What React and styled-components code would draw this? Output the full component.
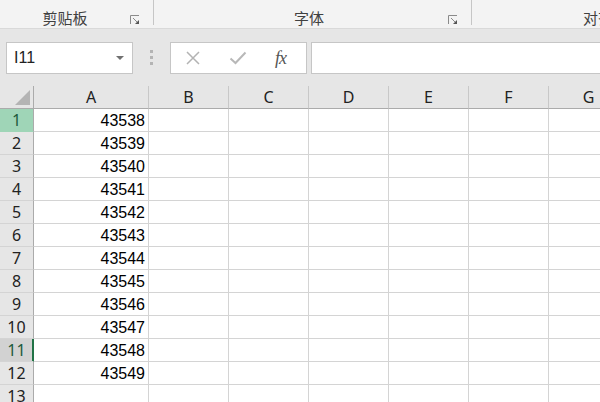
import React from "react";
import styled, { createGlobalStyle } from "styled-components";

const GlobalStyle = createGlobalStyle`
  html, body {
    margin: 0;
    padding: 0;
    width: 600px;
    height: 402px;
    overflow: hidden;
    background: #ffffff;
    font-family: "Noto Sans CJK SC", "Noto Sans", sans-serif;
  }
`;

const Page = styled.div`
  width: 600px;
  height: 402px;
  overflow: hidden;
  display: flex;
  flex-direction: column;
`;

const Ribbon = styled.div`
  display: flex;
  height: 28px;
  flex-shrink: 0;
  background: #f3f3f3;
  border-bottom: 1px solid #d9d9d9;
`;

const Group = styled.div`
  position: relative;
  display: flex;
  width: ${(p) => p.$width}px;
  flex-shrink: 0;
  padding-left: ${(p) => p.$shift || 0}px;
  box-sizing: border-box;
  &::after {
    content: "";
    position: absolute;
    right: 0;
    top: 0;
    height: 25px;
    width: 1px;
    background: #c6c6c6;
  }
`;

const GroupLabel = styled.div`
  flex: 1;
  text-align: center;
  font-size: 15px;
  line-height: 15px;
  padding-top: 10px;
  color: #404040;
  white-space: nowrap;
`;

const Launcher = styled.div`
  width: 24px;
  display: flex;
  justify-content: flex-start;
  padding-top: 15px;
`;

const FormulaBar = styled.div`
  display: flex;
  align-items: flex-start;
  height: 57px;
  flex-shrink: 0;
  background: #e6e6e6;
  padding: 13px 0 0 6px;
  box-sizing: border-box;
`;

const NameBox = styled.div`
  width: 127px;
  height: 32px;
  box-sizing: border-box;
  background: #fff;
  border: 1px solid #c6c6c6;
  display: flex;
  align-items: center;
  padding: 0 6px 0 7px;
  font-family: "Liberation Sans", Arial, sans-serif;
  font-size: 16px;
  color: #222;
`;

const NameText = styled.span`
  flex: 1;
`;

const Caret = styled.span`
  width: 0;
  height: 0;
  border-left: 4px solid transparent;
  border-right: 4px solid transparent;
  border-top: 4px solid #707070;
  margin-right: 2px;
`;

const Dots = styled.div`
  width: 37px;
  display: flex;
  flex-direction: column;
  align-items: center;
  gap: 3px;
  padding-top: 8px;
  span {
    width: 3px;
    height: 3px;
    background: #b4b4b4;
  }
`;

const FxBox = styled.div`
  width: 137px;
  height: 32px;
  box-sizing: border-box;
  background: #fff;
  border: 1px solid #c6c6c6;
  display: flex;
  align-items: center;
  gap: 28px;
  padding-left: 14px;
  margin-right: 4px;
`;

const FxLabel = styled.span`
  font-family: "Liberation Serif", "Times New Roman", serif;
  font-style: italic;
  font-size: 18px;
  color: #555;
  letter-spacing: -1px;
`;

const FormulaInput = styled.div`
  flex: 1;
  height: 32px;
  box-sizing: border-box;
  background: #fff;
  border: 1px solid #c6c6c6;
  border-right: none;
`;

const Sheet = styled.div`
  display: grid;
  grid-template-columns: 34px 115px repeat(6, 80px);
  grid-auto-rows: 23px;
`;

const Corner = styled.div`
  background: #e6e6e6;
  border-right: 1px solid #ababab;
  border-bottom: 1px solid #ababab;
  display: flex;
  align-items: flex-end;
  justify-content: flex-end;
  padding: 0 3px 3px 0;
`;

const ColHead = styled.div`
  background: #e6e6e6;
  border-right: 1px solid #c8c8c8;
  border-bottom: 1px solid #ababab;
  font-family: "Noto Sans", sans-serif;
  font-size: 16px;
  line-height: 23px;
  text-align: center;
  color: #222;
`;

const RowHead = styled.div`
  background: ${(p) => (p.$active ? "#9fd5b7" : p.$current ? "#d2d2d2" : "#e6e6e6")};
  border-right: 1px solid ${(p) => (p.$current ? "#217346" : "#ababab")};
  border-bottom: 1px solid ${(p) => (p.$active ? "#9fd5b7" : "#d4d4d4")};
  box-shadow: ${(p) => (p.$current ? "inset -1px 0 0 #217346" : "none")};
  font-family: "Noto Sans", sans-serif;
  font-size: 16px;
  line-height: 23px;
  text-align: center;
  color: ${(p) => (p.$active || p.$current ? "#1d5a3c" : "#222")};
`;

const Cell = styled.div`
  border-right: 1px solid #d4d4d4;
  border-bottom: 1px solid #d4d4d4;
  font-family: "Liberation Sans", Arial, sans-serif;
  font-size: 16px;
  line-height: 23px;
  text-align: right;
  padding-right: 3px;
  color: #000;
`;

const columns = ["A", "B", "C", "D", "E", "F", "G"];
const rows = Array.from({ length: 13 }, (_, i) => i + 1);

const LauncherIcon = () => (
  <svg width="10" height="10" viewBox="0 0 10 10">
    <path d="M0.5 9V0.5H9" fill="none" stroke="#8a8a8a" strokeWidth="1" />
    <path d="M3 3L7 7" stroke="#8a8a8a" strokeWidth="1" />
    <path d="M9 5V9H5Z" fill="#555" />
  </svg>
);

const CrossIcon = () => (
  <svg width="16" height="16" viewBox="0 0 16 16">
    <path d="M2 2L14 14M14 2L2 14" stroke="#b3b3b3" strokeWidth="1.5" />
  </svg>
);

const CheckIcon = () => (
  <svg width="18" height="16" viewBox="0 0 18 16">
    <path d="M1.5 8.5L6.5 13L16.5 2.5" fill="none" stroke="#b8b8b8" strokeWidth="2" />
  </svg>
);

export default function App() {
  return (
    <Page>
      <GlobalStyle />
      <Ribbon>
        <Group $width={154}>
          <GroupLabel>剪贴板</GroupLabel>
          <Launcher><LauncherIcon /></Launcher>
        </Group>
        <Group $width={318} $shift={16}>
          <GroupLabel>字体</GroupLabel>
          <Launcher><LauncherIcon /></Launcher>
        </Group>
        <Group $width={282}>
          <GroupLabel>对齐方式</GroupLabel>
        </Group>
      </Ribbon>
      <FormulaBar>
        <NameBox>
          <NameText>I11</NameText>
          <Caret />
        </NameBox>
        <Dots>
          <span />
          <span />
          <span />
        </Dots>
        <FxBox>
          <CrossIcon />
          <CheckIcon />
          <FxLabel>fx</FxLabel>
        </FxBox>
        <FormulaInput />
      </FormulaBar>
      <Sheet>
        <Corner>
          <svg width="15" height="15" viewBox="0 0 15 15">
            <path d="M15 0V15H0Z" fill="#b4b4b4" />
          </svg>
        </Corner>
        {columns.map((c) => (
          <ColHead key={c}>{c}</ColHead>
        ))}
        {rows.map((r) => (
          <React.Fragment key={r}>
            <RowHead $active={r === 1} $current={r === 11}>{r}</RowHead>
            {columns.map((c) => (
              <Cell key={c}>{c === "A" && r <= 12 ? 43537 + r : ""}</Cell>
            ))}
          </React.Fragment>
        ))}
      </Sheet>
    </Page>
  );
}
